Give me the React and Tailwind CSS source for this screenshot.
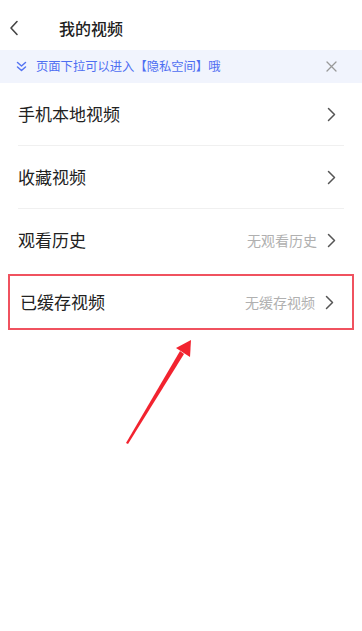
import React from "react";

const font = { fontFamily: '"Noto Sans CJK SC", "Noto Sans", sans-serif' };

function Chevron() {
  return (
    <svg width="9" height="15" viewBox="0 0 9 15" className="shrink-0">
      <path d="M1.5 1.5 L7.5 7.5 L1.5 13.5" fill="none" stroke="#555" strokeWidth="1.5" strokeLinecap="round" strokeLinejoin="round" />
    </svg>
  );
}

function Row({ label, hint }) {
  return (
    <div className="flex h-[62px] items-center justify-between pl-[18px] pr-[26px]">
      <span className="text-[17px] text-[#222]">{label}</span>
      <div className="flex items-center gap-[10px]">
        {hint && <span className="text-[14px] text-[#b0b0b0]">{hint}</span>}
        <Chevron />
      </div>
    </div>
  );
}

export default function App() {
  return (
    <div className="relative h-[631px] w-[362px] overflow-hidden bg-white" style={font}>
      {/* header */}
      <div className="flex h-[50px] items-center pl-[9px] pt-[5px]">
        <svg width="10" height="16" viewBox="0 0 10 16">
          <path d="M8 1.5 L2 8 L8 14.5" fill="none" stroke="#444" strokeWidth="1.6" strokeLinecap="round" strokeLinejoin="round" />
        </svg>
        <span className="ml-[40px] text-[16px] font-medium text-[#222]">我的视频</span>
      </div>
      {/* banner */}
      <div className="flex h-[33px] items-center justify-between bg-[#f1f4fd] pl-[16px] pr-[25px]">
        <div className="flex items-center gap-[9px]">
          <svg width="11" height="11" viewBox="0 0 11 11">
            <path d="M1.5 1.5 L5.5 5 L9.5 1.5 M1.5 6 L5.5 9.5 L9.5 6" fill="none" stroke="#5574f2" strokeWidth="1.5" strokeLinecap="round" strokeLinejoin="round" />
          </svg>
          <span className="text-[12.3px] text-[#4e6ef2]">页面下拉可以进入【隐私空间】哦</span>
        </div>
        <svg width="11" height="11" viewBox="0 0 11 11">
          <path d="M1 1 L10 10 M10 1 L1 10" stroke="#999" strokeWidth="1.3" strokeLinecap="round" />
        </svg>
      </div>
      {/* list */}
      <Row label="手机本地视频" />
      <div className="mx-[18px] h-px bg-[#f0f0f0]" />
      <Row label="收藏视频" />
      <div className="mx-[18px] h-px bg-[#f0f0f0]" />
      <Row label="观看历史" hint="无观看历史" />
      <div className="mx-[8px] mt-[3px] h-[56px] border-2 border-[#f0525f]">
        <div className="-ml-[8px] -mr-[8px] -mt-[5px]">
          <Row label="已缓存视频" hint="无缓存视频" />
        </div>
      </div>
      {/* annotation arrow */}
      <svg className="absolute left-0 top-0" width="362" height="631" viewBox="0 0 362 631">
        <polygon points="126,443 128,444 184,354 180,351" fill="#f2232f" />
        <polygon points="191,340 176,348 190,357" fill="#f2232f" />
      </svg>
    </div>
  );
}
